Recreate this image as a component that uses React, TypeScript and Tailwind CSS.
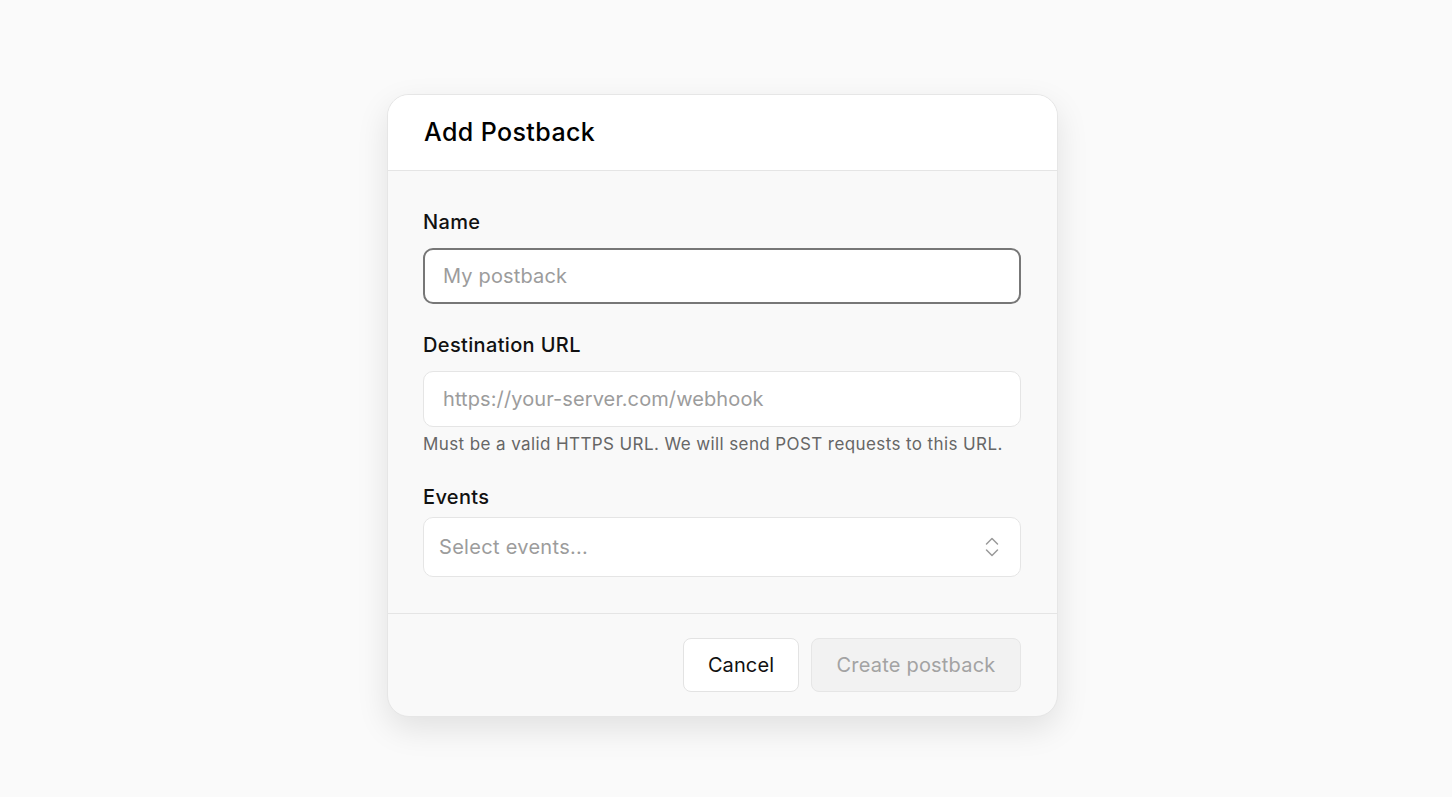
import React from 'react'

const font = { fontFamily: 'Inter, "Noto Sans", sans-serif' }

const ChevronsIcon = () => (
  <svg width="16" height="22" viewBox="0 0 16 22" fill="none" className="text-[#9a9a9a]">
    <path d="M2.5 8 L8 2.5 L13.5 8" stroke="currentColor" strokeWidth="1.5" strokeLinecap="round" strokeLinejoin="round" />
    <path d="M2.5 14 L8 19.5 L13.5 14" stroke="currentColor" strokeWidth="1.5" strokeLinecap="round" strokeLinejoin="round" />
  </svg>
)

export default function App() {
  return (
    <div className="min-h-screen w-full bg-[#fafafa] flex justify-center pt-[94px] pr-[7px]" style={font}>
      <div className="w-[671px] h-[623px] rounded-[22px] border border-[#e6e6e6] bg-[#f9f9f9] shadow-[0_12px_32px_rgba(0,0,0,0.10)] overflow-hidden flex flex-col">
        <div className="h-[76px] bg-white border-b border-[#e5e5e5] pl-[36px] pr-9 flex items-center">
          <h2 className="text-[25px] font-medium text-black tracking-[0.4px] leading-none">Add Postback</h2>
        </div>

        <div className="pl-[35px] pr-9 pt-[37px] pb-[36px] flex flex-col">
          <label className="text-[20px] font-medium text-[#111] leading-[28px] tracking-[0.35px]">Name</label>
          <input
            placeholder="My postback"
            className="mt-[12px] h-[56px] w-full rounded-[10px] border-2 border-[#777] bg-white px-[18px] text-[20px] tracking-[0.15px] text-[#111] placeholder:text-[#9c9c9c] outline-none"
          />

          <label className="mt-[27px] text-[20px] font-medium text-[#111] leading-[28px] tracking-[0.35px]">Destination URL</label>
          <input
            placeholder="https://your-server.com/webhook"
            className="mt-[12px] h-[56px] w-full rounded-[10px] border border-[#e5e5e5] bg-white px-[19px] text-[20px] tracking-[0.1px] text-[#111] placeholder:text-[#9c9c9c] outline-none"
          />
          <p className="mt-[5px] text-[17px] text-[#666] leading-[24px] tracking-[0.4px]">
            Must be a valid HTTPS URL. We will send POST requests to this URL.
          </p>

          <label className="mt-[27px] text-[20px] font-medium text-[#111] leading-[28px] tracking-[0.35px]">Events</label>
          <button className="mt-[6px] h-[60px] w-full rounded-[10px] border border-[#e5e5e5] bg-white pl-[15px] pr-[20px] flex items-center justify-between">
            <span className="text-[20px] tracking-[0.3px] text-[#9c9c9c]">Select events...</span>
            <ChevronsIcon />
          </button>
        </div>

        <div className="border-t border-[#e5e5e5] px-9 pt-[24px] flex justify-end gap-3">
          <button className="h-[54px] w-[116px] rounded-[8px] border border-[#e3e3e3] bg-white text-[20px] tracking-[0.1px] text-[#111]">
            Cancel
          </button>
          <button disabled className="h-[54px] w-[210px] rounded-[8px] border border-[#e6e6e6] bg-[#f2f2f2] text-[20px] tracking-[0.2px] text-[#a3a3a3]">
            Create postback
          </button>
        </div>
      </div>
    </div>
  )
}
